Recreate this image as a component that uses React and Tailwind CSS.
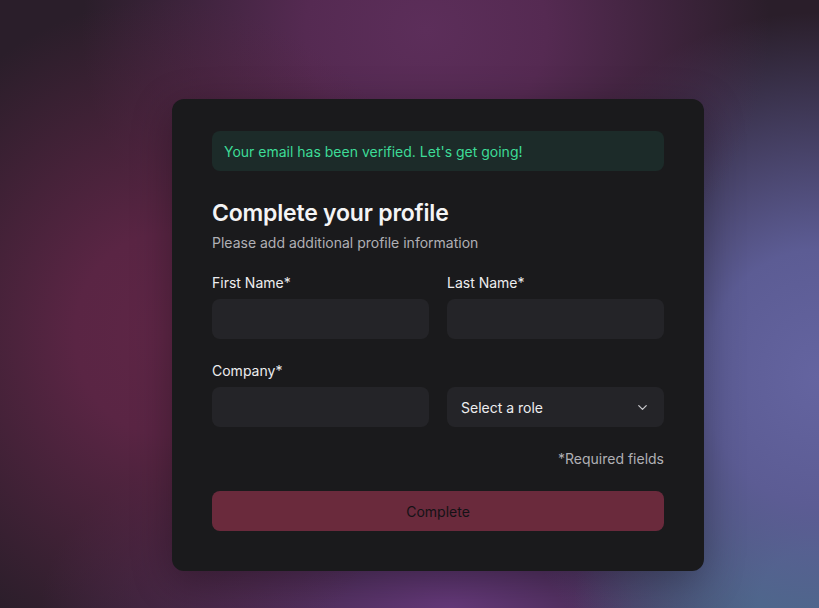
import { ChevronDown } from "lucide-react";

function Field({ label, children }) {
    return (
        <div className="flex flex-col">
            <label className="h-[16px] text-[14px] leading-[16px] text-[#ededef] mb-[8px]">{label}</label>
            {children}
        </div>
    );
}

export default function App() {
    return (
        <div
            className="min-h-[608px] w-full pl-[172px] pt-[99px] pb-[37px] bg-[#2a1e2a] bg-[radial-gradient(ellipse_36%_55%_at_20%_55%,#5e2646_0%,#5a2544_30%,transparent_100%),radial-gradient(ellipse_42%_50%_at_52%_5%,#5c2e5a_0%,#552a52_35%,transparent_100%),radial-gradient(ellipse_40%_60%_at_100%_62%,#6464a0_0%,#5c5c94_35%,transparent_100%),radial-gradient(ellipse_30%_40%_at_100%_100%,#3f7282_0%,#3f7282_25%,transparent_100%),radial-gradient(ellipse_50%_35%_at_55%_100%,#65397a_0%,transparent_100%)]"
            style={{ fontFamily: "Inter, 'Noto Sans', sans-serif" }}
        >
            <div className="w-[532px] rounded-xl bg-[#1a1a1c] px-[40px] pt-[32px] pb-[40px] shadow-[0_10px_40px_rgba(0,0,0,0.3)]">
                <div className="h-[40px] rounded-lg bg-[#1c2b29] px-[12px] flex items-center text-[14px] text-[#3ddc97]">
                    Your email has been verified. Let's get going!
                </div>

                <h1 className="mt-[29px] text-[23px] leading-[26px] font-semibold tracking-[-0.2px] text-[#f4f4f5]">
                    Complete your profile
                </h1>
                <p className="mt-[9px] text-[14px] leading-[16px] text-[#b0b0b5]">
                    Please add additional profile information
                </p>

                <div className="mt-[24px] grid grid-cols-2 gap-x-[18px] gap-y-[24px]">
                    <Field label="First Name*">
                        <div className="h-[40px] rounded-lg bg-[#242428]" />
                    </Field>
                    <Field label="Last Name*">
                        <div className="h-[40px] rounded-lg bg-[#242428]" />
                    </Field>
                    <Field label="Company*">
                        <div className="h-[40px] rounded-lg bg-[#242428]" />
                    </Field>
                    <div className="flex flex-col justify-end">
                        <div className="h-[40px] rounded-lg bg-[#242428] pl-[14px] pr-[14px] flex items-center justify-between text-[14px] text-[#ededef]">
                            <span>Select a role</span>
                            <ChevronDown size={15} strokeWidth={2} className="text-[#c8c8cc]" />
                        </div>
                    </div>
                </div>

                <div className="mt-[24px] text-right text-[14px] leading-[16px] text-[#b0b0b5]">
                    *Required fields
                </div>

                <button className="mt-[24px] h-[40px] w-full rounded-lg bg-[#6a2a3c] text-[14px] text-[#141216]">
                    Complete
                </button>
            </div>
        </div>
    );
}
